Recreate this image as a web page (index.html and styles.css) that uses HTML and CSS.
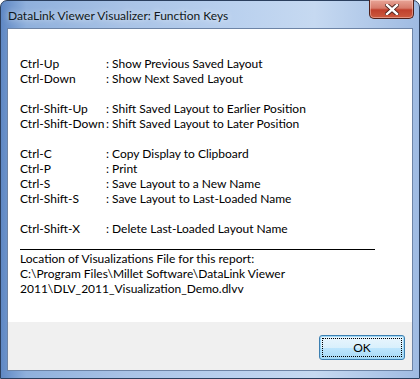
FILE: index.html
```html
<!DOCTYPE html>
<html lang="en">
<head>
  <meta charset="UTF-8">
  <title>DataLink Viewer Visualizer: Function Keys</title>
  <link rel="stylesheet" href="styles.css">
</head>
<body>
  <div class="window">
    <div class="titlebar">
      <span class="title">DataLink Viewer Visualizer: Function Keys</span>
      <div class="close-btn">
        <svg width="14" height="11" viewBox="0 0 14 11">
          <path d="M2 1 L12 10 M12 1 L2 10" stroke="#4a1f1a" stroke-width="4.2" stroke-linecap="square"/>
          <path d="M2 1 L12 10 M12 1 L2 10" stroke="#ffffff" stroke-width="2.4" stroke-linecap="square"/>
        </svg>
      </div>
    </div>

    <div class="client">
      <div class="content">
        <div class="row"><span class="key">Ctrl-Up</span><span>: Show Previous Saved Layout</span></div>
        <div class="row"><span class="key">Ctrl-Down</span><span>: Show Next Saved Layout</span></div>
        <div class="blank"></div>
        <div class="row"><span class="key">Ctrl-Shift-Up</span><span>: Shift Saved Layout to Earlier Position</span></div>
        <div class="row"><span class="key">Ctrl-Shift-Down</span><span>: Shift Saved Layout to Later Position</span></div>
        <div class="blank"></div>
        <div class="row"><span class="key">Ctrl-C</span><span>: Copy Display to Clipboard</span></div>
        <div class="row"><span class="key">Ctrl-P</span><span>: Print</span></div>
        <div class="row"><span class="key">Ctrl-S</span><span>: Save Layout to a New Name</span></div>
        <div class="row"><span class="key">Ctrl-Shift-S</span><span>: Save Layout to Last-Loaded Name</span></div>
        <div class="blank"></div>
        <div class="row"><span class="key">Ctrl-Shift-X</span><span>: Delete Last-Loaded Layout Name</span></div>

        <hr class="divider">

        <div class="location">
          Location of Visualizations File for this report:<br>
          C:\Program Files\Millet Software\DataLink Viewer<br>
          2011\DLV_2011_Visualization_Demo.dlvv
        </div>
      </div>

      <div class="footer">
        <button class="ok-btn">OK</button>
      </div>
    </div>
  </div>
</body>
</html>
```

FILE: styles.css
```css
    body {
      margin: 0;
      font-family: 'Lato', 'Open Sans', sans-serif;
      font-size: 12px;
      color: #000;
      background: #fff;
    }
    .window {
      width: 420px;
      height: 379px;
      box-sizing: border-box;
      border: 1px solid #2b3f5e;
      border-radius: 7px 7px 0 0;
      padding: 0 6px 7px 6px;
      display: flex;
      flex-direction: column;
      background: linear-gradient(to right, #5f88c4 0%, #8fb0dc 6%, #a9c3e6 30%, #b9d0ee 55%, #c6d9f1 75%, #9fbbe2 100%);
    }
    .titlebar {
      height: 27px;
      display: flex;
      justify-content: space-between;
      align-items: flex-start;
      flex-shrink: 0;
    }
    .title {
      margin-top: 7px;
      margin-left: 1px;
      color: #101820;
      text-shadow: 0 0 6px rgba(255, 255, 255, 0.9);
    }
    .close-btn {
      width: 45px;
      height: 19px;
      margin-top: -1px;
      margin-right: -1px;
      box-sizing: border-box;
      border: 1px solid #4e1f1a;
      border-top: none;
      border-radius: 0 0 5px 5px;
      background: linear-gradient(to bottom, #e8a597 0%, #d77b6b 45%, #c0402c 55%, #cc5a3f 100%);
      box-shadow: inset 0 0 0 1px rgba(255, 220, 210, 0.45);
      display: flex;
      align-items: center;
      justify-content: center;
    }
    .client {
      flex: 1;
      display: flex;
      flex-direction: column;
      border: 1px solid #6d84a6;
      background: #f0f0f0;
    }
    .content {
      flex: 1;
      background: #fff;
      padding: 27px 12px 0 12px;
      line-height: 15px;
    }
    .row {
      display: flex;
      white-space: nowrap;
    }
    .key {
      width: 86px;
      flex-shrink: 0;
    }
    .blank {
      height: 15px;
    }
    .divider {
      width: 355px;
      margin: 13px 0 1px 0;
      border: none;
      border-top: 1px solid #000;
      height: 0;
    }
    .location {
      white-space: nowrap;
    }
    .footer {
      height: 48px;
      flex-shrink: 0;
      display: flex;
      justify-content: flex-end;
      align-items: flex-start;
      padding: 13px 7px 0 0;
      box-sizing: border-box;
    }
    .ok-btn {
      width: 86px;
      height: 25px;
      font-family: inherit;
      font-size: 12px;
      color: #000;
      border: 1px solid #3c7fb1;
      border-radius: 3px;
      background: linear-gradient(to bottom, #eaf6fd 0%, #d9f0fc 50%, #bee6fd 51%, #a7d9f5 100%);
      box-shadow: inset 0 0 0 1px #9fd8f6;
      outline: 1px dotted #000;
      outline-offset: -4px;
      padding: 0;
    }
```
